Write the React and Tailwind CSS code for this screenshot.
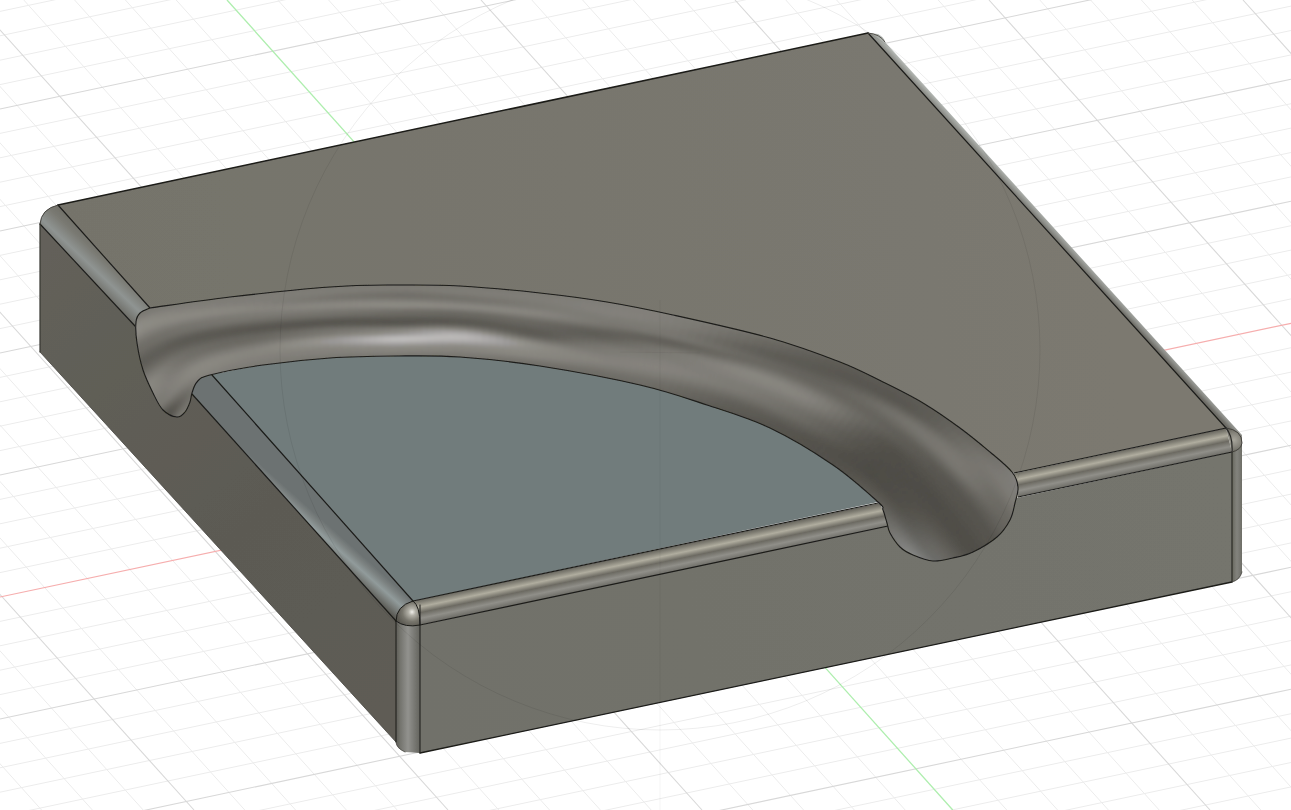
import React from "react";

const W = 1291, H = 810;

function cr(pts, t) {
  const n = pts.length - 1;
  const f = Math.min(t * n, n - 1e-6);
  const i = Math.floor(f), u = f - i;
  const p0 = pts[Math.max(i - 1, 0)], p1 = pts[i], p2 = pts[i + 1], p3 = pts[Math.min(i + 2, n)];
  const c = (a, b, c2, d) =>
    0.5 * (2 * b + (c2 - a) * u + (2 * a - 5 * b + 4 * c2 - d) * u * u + (3 * b - a - 3 * c2 + d) * u * u * u);
  return [c(p0[0], p1[0], p2[0], p3[0]), c(p0[1], p1[1], p2[1], p3[1])];
}

function smooth(pts) {
  let d = `M${pts[0][0]},${pts[0][1]}`;
  for (let i = 0; i < pts.length - 1; i++) {
    const p0 = pts[Math.max(i - 1, 0)], p1 = pts[i], p2 = pts[i + 1], p3 = pts[Math.min(i + 2, pts.length - 1)];
    d += `C${(p1[0] + (p2[0] - p0[0]) / 6).toFixed(1)},${(p1[1] + (p2[1] - p0[1]) / 6).toFixed(1)} ${(p2[0] - (p3[0] - p1[0]) / 6).toFixed(1)},${(p2[1] - (p3[1] - p1[1]) / 6).toFixed(1)} ${p2[0]},${p2[1]}`;
  }
  return d;
}

const stationsU = [[105,332],[128,320],[150,308],[230,297],[330,287],[397,285],[460,286],[540,293],[607,302],[673,315],[770,338],[840,362],[923,403],[990,452],[1022,487],[1045,535]];
const stationsL = [[148,437],[172,425],[205,385],[263,365],[330,358],[397,356],[460,357],[530,365],[590,375],[650,388],[730,414],[790,441],[850,475],[885,520],[920,567],[965,610]];
const p0 = [[0,111],[.13,146],[.3,110],[.4,95],[.6,138],[.78,124],[.9,80],[1,122]];
const profiles = [
  p0,
  p0,
  [[0,122],[.18,140],[.33,114],[.45,92],[.6,112],[.77,140],[1,122]],
  [[0,124],[.1,128],[.2,138],[.32,122],[.48,88],[.6,104],[.78,134],[1,124]],
  [[0,122],[.08,128],[.17,118],[.27,138],[.38,118],[.5,86],[.62,120],[.74,152],[.88,132],[1,120]],
  [[0,119],[.08,125],[.17,112],[.3,142],[.4,110],[.53,85],[.66,140],[.75,198],[.88,138],[1,120]],
  [[0,120],[.1,128],[.2,115],[.3,138],[.4,105],[.5,88],[.7,194],[.85,136],[1,118]],
  [[0,124],[.1,128],[.2,124],[.3,136],[.43,106],[.57,88],[.72,141],[.84,138],[.96,114],[1,110]],
  [[0,128],[.15,132],[.3,122],[.45,92],[.62,122],[.78,134],[.95,112],[1,105]],
  [[0,131],[.12,130],[.28,122],[.37,95],[.49,123],[.7,135],[.94,111],[1,100]],
  [[0,117],[.1,105],[.2,94],[.32,106],[.47,138],[.66,125],[.88,95],[1,85]],
  [[0,95],[.15,88],[.3,100],[.5,134],[.7,110],[.9,85],[1,82]],
  [[0,92],[.12,88],[.25,118],[.4,96],[.55,80],[.8,76],[1,84]],
  [[0,108],[.12,120],[.28,124],[.42,88],[.6,78],[.8,80],[1,110]],
  [[0,138],[.1,128],[.25,106],[.45,85],[.6,79],[.85,112],[1,150]],
  [[0,122],[.15,118],[.3,100],[.45,85],[.6,78],[.85,100],[1,130]],
];

function evalProfile(p, v) {
  for (let i = 0; i < p.length - 1; i++) {
    if (v <= p[i + 1][0]) {
      const u = (v - p[i][0]) / (p[i + 1][0] - p[i][0]);
      const s = u * u * (3 - 2 * u);
      return p[i][1] + (p[i + 1][1] - p[i][1]) * s;
    }
  }
  return p[p.length - 1][1];
}

function grayAt(t, v) {
  const f = Math.min(Math.max(t, 0) * (profiles.length - 1), profiles.length - 1 - 1e-6);
  const i = Math.floor(f), u = f - i;
  return evalProfile(profiles[i], v) * (1 - u) + evalProfile(profiles[i + 1], v) * u;
}

function shade(t, v) {
  let g = 0, w = 0;
  for (let k = -4; k <= 4; k++) {
    const wt = 5 - Math.abs(k);
    g += grayAt(Math.min(t + k * 0.007, 1), v) * wt;
    w += wt;
  }
  g /= w;
  const f = t * (profiles.length - 1);
  const warm = g > 150 ? 3 : 8;
  const cool = Math.max(0, f - 12.8) * Math.max(0, v - 0.75) * 24;
  const coolTop = Math.max(0, f - 13) * Math.max(0, 0.15 - v) * 25;
  const r = g - cool * 0.4;
  const gg = g - 2 + cool * 0.2;
  const b = g - warm + cool + coolTop;
  return `rgb(${Math.round(r)},${Math.round(gg)},${Math.round(b)})`;
}

function avg(line, rad) {
  return line.map((_, i) => {
    let x = 0, y = 0, c = 0;
    for (let k = -rad; k <= rad; k++) {
      const q = line[Math.min(Math.max(i + k, 0), line.length - 1)];
      x += q[0]; y += q[1]; c++;
    }
    return [x / c, y / c];
  });
}

const meshQuads = (() => {
  const N = 150, M = 40, out = [];
  let A = [], B = [];
  for (let i = 0; i <= N; i++) {
    A.push(cr(stationsU, i / N));
    B.push(cr(stationsL, i / N));
  }
  A = avg(avg(A, 4), 4);
  B = avg(avg(B, 4), 4);
  const gridPts = [];
  for (let i = 0; i <= N; i++) {
    const row = [];
    for (let j = 0; j <= M; j++) {
      const v = -0.03 + 1.06 * (j / M);
      row.push([A[i][0] + (B[i][0] - A[i][0]) * v, A[i][1] + (B[i][1] - A[i][1]) * v]);
    }
    gridPts.push(row);
  }
  for (let i = 0; i < N; i++) {
    for (let j = 0; j < M; j++) {
      const q = [gridPts[i][j], gridPts[i + 1][j], gridPts[i + 1][j + 1], gridPts[i][j + 1]];
      out.push({
        k: `${i}-${j}`,
        p: q.map((c) => `${c[0].toFixed(1)},${c[1].toFixed(1)}`).join(" "),
        c: shade((i + 0.5) / N, (j + 0.5) / M),
      });
    }
  }
  return out;
})();

const upper = [[150,308],[230,297],[330,287],[397,285],[460,286],[540,293],[607,302],[673,315],[770,338],[840,362],[883,382],[923,403],[960,428],[990,452],[1012,472]];
const rightEnd = [[1018,487],[1015,503],[1010,520],[997,537],[973,552],[953,558],[933,561],[913,555],[900,547],[890,533],[887,523],[883,510],[878,502]];
const lowerAsc = [[210,375],[263,365],[330,358],[397,356],[460,357],[540,366],[640,385],[707,405],[770,428],[833,465],[878,502]];
const lower = lowerAsc.slice(0, -1).reverse();
const leftEnd = [[197,382],[192,393],[190,402],[185,412],[177,417],[163,410],[153,393],[143,370],[137,343],[136,322],[140,313],[150,308]];
const groovePath = smooth([...upper, ...rightEnd, ...lower, ...leftEnd]) + "Z";
const floorPath = smooth(lowerAsc) + "L413,601 L212,376 Z";

const gridA = [];
for (let k = -10; k <= 62; k++) gridA.push({ k, y0: 109 + k * 24.4, major: ((k % 5) + 5) % 5 === 0 });
const gridB = [];
for (let k = -30; k <= 30; k++) gridB.push({ k, x0: 227 + k * 50.8, major: ((k % 5) + 5) % 5 === 0 });

export default function App() {
  return (
    <div className="w-[1291px] h-[810px] bg-white overflow-hidden">
      <svg viewBox={`0 0 ${W} ${H}`} className="block w-full h-full">
        <defs>
          <filter id="soft" x="-2%" y="-2%" width="104%" height="104%"><feGaussianBlur stdDeviation="0.45" /></filter>
          <filter id="soft2" x="-2%" y="-2%" width="104%" height="104%"><feGaussianBlur stdDeviation="1.4" /></filter>
          <clipPath id="grooveClip"><path d={groovePath} /></clipPath>
          <linearGradient id="topFace" gradientUnits="userSpaceOnUse" x1="60" y1="300" x2="1100" y2="200">
            <stop offset="0" stopColor="#75736b" /><stop offset="1" stopColor="#7b7970" />
          </linearGradient>
          <linearGradient id="frontFace" gradientUnits="userSpaceOnUse" x1="420" y1="700" x2="1232" y2="500">
            <stop offset="0" stopColor="#71716a" /><stop offset="1" stopColor="#74746d" />
          </linearGradient>
          <linearGradient id="leftFace" gradientUnits="userSpaceOnUse" x1="40" y1="250" x2="396" y2="700">
            <stop offset="0" stopColor="#63615a" /><stop offset=".6" stopColor="#5c5a53" /><stop offset="1" stopColor="#5e5c55" />
          </linearGradient>
          <linearGradient id="stripTL" gradientUnits="userSpaceOnUse" x1="126" y1="333" x2="160" y2="297">
            <stop offset="0" stopColor="#55544e" /><stop offset=".25" stopColor="#6f6f69" /><stop offset=".5" stopColor="#8f9492" /><stop offset=".75" stopColor="#7a7a73" /><stop offset="1" stopColor="#6c6b64" />
          </linearGradient>
          <linearGradient id="stripRecess" gradientUnits="userSpaceOnUse" x1="396" y1="620" x2="413" y2="601">
            <stop offset="0" stopColor="#55544e" /><stop offset=".3" stopColor="#787c79" /><stop offset=".55" stopColor="#919b9b" /><stop offset=".8" stopColor="#7c8281" /><stop offset="1" stopColor="#6c7272" />
          </linearGradient>
          <linearGradient id="stripFront" gradientUnits="userSpaceOnUse" x1="645" y1="552" x2="650" y2="576">
            <stop offset="0" stopColor="#64625b" /><stop offset=".12" stopColor="#7e7c72" /><stop offset=".32" stopColor="#b0ad9f" /><stop offset=".55" stopColor="#6c6a62" /><stop offset=".78" stopColor="#908f89" /><stop offset="1" stopColor="#706f69" />
          </linearGradient>
          <linearGradient id="stripFront2" gradientUnits="userSpaceOnUse" x1="1120" y1="450" x2="1125" y2="474">
            <stop offset="0" stopColor="#64625b" /><stop offset=".12" stopColor="#7e7c72" /><stop offset=".32" stopColor="#b0ad9f" /><stop offset=".55" stopColor="#6c6a62" /><stop offset=".78" stopColor="#908f89" /><stop offset="1" stopColor="#706f69" />
          </linearGradient>
          <linearGradient id="stripRight" gradientUnits="userSpaceOnUse" x1="1060" y1="245" x2="1066.5" y2="239">
            <stop offset="0" stopColor="#6d6c66" /><stop offset=".35" stopColor="#8a8b86" /><stop offset="1" stopColor="#b6bab6" />
          </linearGradient>
          <linearGradient id="vertFL" gradientUnits="userSpaceOnUse" x1="396" y1="0" x2="420" y2="0">
            <stop offset="0" stopColor="#5e5d57" /><stop offset=".2" stopColor="#767670" /><stop offset=".5" stopColor="#92928e" /><stop offset=".8" stopColor="#757570" /><stop offset="1" stopColor="#64645e" />
          </linearGradient>
          <linearGradient id="vertR" gradientUnits="userSpaceOnUse" x1="1232" y1="0" x2="1242" y2="0">
            <stop offset="0" stopColor="#68685f" /><stop offset=".5" stopColor="#83837d" /><stop offset="1" stopColor="#6d6d67" />
          </linearGradient>
          <radialGradient id="ball1" gradientUnits="userSpaceOnUse" cx="412" cy="612" r="16">
            <stop offset="0" stopColor="#f0efea" /><stop offset=".22" stopColor="#b3b1a8" /><stop offset=".6" stopColor="#77756c" /><stop offset="1" stopColor="#57554e" />
          </radialGradient>
          <radialGradient id="ball2" gradientUnits="userSpaceOnUse" cx="1234" cy="440" r="13">
            <stop offset="0" stopColor="#a8a69c" /><stop offset=".55" stopColor="#85837a" /><stop offset="1" stopColor="#65635c" />
          </radialGradient>
        </defs>

        <g filter="url(#soft)">
          {gridA.filter((l) => !l.major).map((l) => (
            <line key={l.k} x1="0" y1={l.y0} x2={W} y2={l.y0 - 0.212 * W} stroke="#ececec" strokeWidth="1" />
          ))}
          {gridB.filter((l) => !l.major).map((l) => (
            <line key={l.k} x1={l.x0} y1="0" x2={l.x0 + 0.9 * H} y2={H} stroke="#ececec" strokeWidth="1" />
          ))}
          {gridA.filter((l) => l.major && l.y0 !== 597).map((l) => (
            <line key={l.k} x1="0" y1={l.y0} x2={W} y2={l.y0 - 0.212 * W} stroke="#d8d8d8" strokeWidth="1.1" />
          ))}
          {gridB.filter((l) => l.major && l.k !== 0).map((l) => (
            <line key={l.k} x1={l.x0} y1="0" x2={l.x0 + 0.9 * H} y2={H} stroke="#d8d8d8" strokeWidth="1.1" />
          ))}
          <line x1="0" y1="597" x2={W} y2={597 - 0.212 * W} stroke="#f6aeae" strokeWidth="1.2" />
          <line x1="227" y1="0" x2={227 + 0.896 * H} y2={H} stroke="#aeeeae" strokeWidth="1.3" />
        </g>

        <g filter="url(#soft)">
          <path d="M868,33 L878,34 Q884,37 885,42 L1242,435 L1242,443 L1226,428 Z" fill="url(#stripRight)" />
          <path d="M40,224 L135,326 L192,394 L396,621 L396,742 L40,352 Z" fill="url(#leftFace)" />
          <path d="M420,625 L1232,452 L1232,582 L420,753 Z" fill="url(#frontFace)" />
          <path d="M58,205 L868,33 L1226,428 L1015,473 L150,308 Z" fill="url(#topFace)" />
          <path d="M40,224 Q41,209 58,205 L150,308 L135,326 Z" fill="url(#stripTL)" />
          <path d={floorPath} fill="#717b7b" />
          <path d="M212,375 L413,601 L396,621 L192,394 L194,378 L208,368 Z" fill="url(#stripRecess)" />
          <path d="M413,601 L880,503 L890,527 L420,625 Z" fill="url(#stripFront)" />
          <path d="M1012,474 L1226,428 L1232,452 L1018,497 Z" fill="url(#stripFront2)" />
          <path d="M396,621 L420,625 L420,753 L405,752 Q396,748 396,742 Z" fill="url(#vertFL)" />
          <path d="M396,621 Q396,606 413,601 Q420,608 420,625 Q405,628 396,621 Z" fill="url(#ball1)" />
          <path d="M1232,452 L1242,443 L1242,572 Q1240,580 1232,582 Z" fill="url(#vertR)" />
          <path d="M1226,428 Q1242,430 1242,443 Q1241,450 1232,452 Z" fill="url(#ball2)" />

          <g stroke="#1b1b19" fill="none" strokeWidth="1.2" strokeLinecap="round">
            <path d="M58,205 L868,33" strokeWidth="1.5" />
            <path d="M868,33 L1226,428" strokeWidth="1.2" />
            <path d="M58,205 L150,308" />
            <path d="M40,224 L135,326" />
            <path d="M40,224 Q41,209 58,205" strokeWidth="1" stroke="#44433e" />
            <path d="M868,33 Q880,34 885,42" strokeWidth="1" stroke="#55544e" />
            <path d="M40,224 L40,352" stroke="#34342f" />
            <path d="M40,352 L396,742" stroke="#45443f" strokeWidth="0.8" />
            <path d="M212,375 L413,601" />
            <path d="M192,394 L396,621" />
            <path d="M413,601 L878,503" />
            <path d="M420,625 L888,526" />
            <path d="M1014,473 L1226,428" />
            <path d="M1018,497 L1232,452" />
            <path d="M396,621 L396,742" strokeWidth="1" />
            <path d="M420,605 L420,753" strokeWidth="1" />
            <path d="M396,621 Q396,606 413,601 Q420,606 420,625 Q405,628 396,621" strokeWidth="1" />
            <path d="M405,752 Q396,748 396,742" strokeWidth="0.8" stroke="#45443f" />
            <path d="M420,753 L1232,582" strokeWidth="1.3" />
            <path d="M1226,428 Q1233,436 1232,452 L1232,582" strokeWidth="1.2" stroke="#2a2a27" />
            <path d="M1232,452 Q1241,450 1242,443 Q1242,430 1226,428" strokeWidth="0.9" stroke="#3d3c37" />
            <path d="M1232,582 Q1240,580 1242,572" strokeWidth="0.8" stroke="#45443f" />
          </g>
        </g>

        <path d={groovePath} fill="#6f6d65" />
        <g clipPath="url(#grooveClip)">
          <g filter="url(#soft2)">
            {meshQuads.map((q) => (
              <polygon key={q.k} points={q.p} fill={q.c} stroke={q.c} strokeWidth="0.8" />
            ))}
          </g>
        </g>
        <path d={groovePath} fill="none" stroke="#1c1c1a" strokeWidth="1.1" filter="url(#soft)" />

        <g fill="none" stroke="#000" strokeOpacity="0.07" strokeWidth="1">
          <circle cx="660" cy="350" r="380" />
          <line x1="660" y1="300" x2="660" y2="810" strokeOpacity="0.045" />
          <line x1="620" y1="352" x2="700" y2="353" strokeOpacity="0.04" />
        </g>
      </svg>
    </div>
  );
}
